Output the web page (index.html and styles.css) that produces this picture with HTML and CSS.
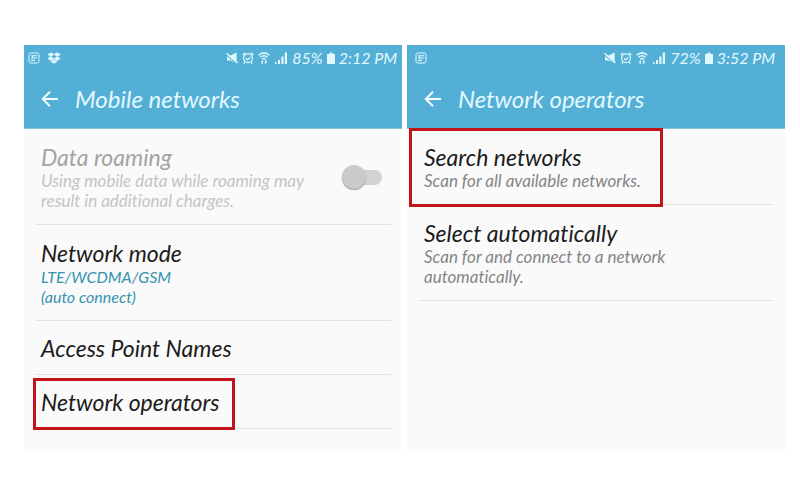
FILE: index.html
```
<!DOCTYPE html>
<html lang="en">
<head>
    <meta charset="utf-8">
    <title>Mobile networks</title>
    <link rel="stylesheet" href="styles.css">
</head>
<body>

<!-- shared icons -->
<svg class="sprite" aria-hidden="true">
    <symbol id="note" viewBox="0 0 12 12">
        <rect x="1" y="1" width="10" height="10" rx="1.8" fill="none" stroke="currentColor"/>
        <path d="M3 3.7h6.2M3 6h6.2M3 8.4h4M4.5 3.5v2.5" fill="none" stroke="currentColor" stroke-width="1.1"/>
    </symbol>
    <symbol id="dropbox" viewBox="0 0 14 12">
        <path d="M4 0.5L7 2.5L3.7 4.6L0.6 2.6ZM10 0.5L13.4 2.6L10.3 4.6L7 2.5ZM0.6 6.6L3.7 4.6L7 6.8L4 8.8ZM13.4 6.6L10.3 4.6L7 6.8L10 8.8ZM3.8 9.6L7 7.7L10.2 9.6L7 11.6Z" fill="currentColor" stroke="currentColor" stroke-width="0.4"/>
    </symbol>
    <symbol id="mute" viewBox="0 0 12 12">
        <path d="M1 3.6H4.6L10.6 0.5V11.5L4.6 8.4H1Z" fill="currentColor"/>
        <path d="M0.3 2.6L11 12" stroke="#53afd6" stroke-width="1.2"/>
        <path d="M0.5 1.2L11.5 11" stroke="currentColor" stroke-width="1.4"/>
    </symbol>
    <symbol id="alarm" viewBox="0 0 12 12">
        <circle cx="6" cy="6.3" r="4.4" fill="none" stroke="currentColor" stroke-width="1.2"/>
        <path d="M0.6 3L3 0.8M11.4 3L9 0.8M4 6.2L5.7 7.8L8.2 5.2M2.8 10.2L1.8 11.6M9.2 10.2L10.2 11.6" fill="none" stroke="currentColor" stroke-width="1.2"/>
    </symbol>
    <symbol id="wifi" viewBox="0 0 12 12">
        <path d="M0.6 3.2Q6 -1.4 11.4 3.2M2.3 5.3Q6 2.2 9.7 5.3M4.2 7.3Q6 5.7 7.8 7.3" fill="none" stroke="currentColor" stroke-width="1.5"/>
        <path d="M2.8 10L4.3 8.3L5.6 10H4.8V12H3.6V10ZM6.4 10H7.2V8H8.4V10H9.2L7.7 12Z" fill="currentColor"/>
    </symbol>
    <symbol id="signal" viewBox="0 0 14 12">
        <path d="M1 10h1.5V12H1ZM4 8h2V12H4ZM7.3 4.5h2.2V12H7.3ZM10.8 0.5H13V12H10.8Z" fill="currentColor"/>
    </symbol>
    <symbol id="battery" viewBox="0 0 8 12">
        <path d="M2.5 0.5h3v1.5H8V12H0V2h2.5Z" fill="currentColor"/>
    </symbol>
    <symbol id="back" viewBox="0 0 18 18">
        <path d="M17 9H2M9 1.8L1.8 9L9 16.2" fill="none" stroke="currentColor" stroke-width="2"/>
    </symbol>
</svg>

<main class="screens">

    <!-- MOBILE NETWORKS -->
    <section class="screen">
        <header class="top">
            <div class="status">
                <div class="notices">
                    <svg class="icon"><use href="#note"/></svg>
                    <svg class="icon wide"><use href="#dropbox"/></svg>
                </div>
                <div class="system">
                    <svg class="icon"><use href="#mute"/></svg>
                    <svg class="icon"><use href="#alarm"/></svg>
                    <svg class="icon"><use href="#wifi"/></svg>
                    <svg class="icon wide"><use href="#signal"/></svg>
                    <span>85%</span>
                    <svg class="icon thin"><use href="#battery"/></svg>
                    <span>2:12 PM</span>
                </div>
            </div>
            <div class="bar">
                <button class="back" aria-label="Back"><svg><use href="#back"/></svg></button>
                <h1>Mobile networks</h1>
            </div>
        </header>
        <ul class="list">
            <li class="row disabled">
                <label class="text" for="roaming">
                    <span class="name">Data roaming</span>
                    <span class="info">Using mobile data while roaming may<br>result in additional charges.</span>
                </label>
                <input class="switch" id="roaming" type="checkbox" disabled>
            </li>
            <li class="row">
                <div class="text">
                    <span class="name">Network mode</span>
                    <span class="info value">LTE/WCDMA/GSM<br>(auto connect)</span>
                </div>
            </li>
            <li class="row single">
                <span class="name">Access Point Names</span>
            </li>
            <li class="row single">
                <span class="name">Network operators</span>
                <span class="mark mark-operators"></span>
            </li>
        </ul>
    </section>

    <!-- NETWORK OPERATORS -->
    <section class="screen second">
        <header class="top">
            <div class="status">
                <div class="notices">
                    <svg class="icon"><use href="#note"/></svg>
                </div>
                <div class="system">
                    <svg class="icon"><use href="#mute"/></svg>
                    <svg class="icon"><use href="#alarm"/></svg>
                    <svg class="icon"><use href="#wifi"/></svg>
                    <svg class="icon wide"><use href="#signal"/></svg>
                    <span>72%</span>
                    <svg class="icon thin"><use href="#battery"/></svg>
                    <span>3:52 PM</span>
                </div>
            </div>
            <div class="bar">
                <button class="back" aria-label="Back"><svg><use href="#back"/></svg></button>
                <h1>Network operators</h1>
            </div>
        </header>
        <ul class="list">
            <li class="row">
                <div class="text">
                    <span class="name">Search networks</span>
                    <span class="info">Scan for all available networks.</span>
                </div>
                <span class="mark mark-search"></span>
            </li>
            <li class="row">
                <div class="text">
                    <span class="name">Select automatically</span>
                    <span class="info">Scan for and connect to a network<br>automatically.</span>
                </div>
            </li>
        </ul>
    </section>

</main>

</body>
</html>
```
FILE: styles.css
```
* {
    box-sizing: border-box;
}

body {
    margin: 0;
    background: #fff;
    color: #1c1c1c;
    font-family: Lato, "Open Sans", sans-serif;
    font-style: italic;
    font-variant-ligatures: none;
}

.sprite {
    position: absolute;
    width: 0;
    height: 0;
}

.screens {
    display: grid;
    grid-template-columns: 1fr 1fr;
    gap: 5px;
    padding: 45px 15px 0 24px;
}

.screen {
    background: #fafafa;
    padding-bottom: 22px;
}

.top {
    background: #53afd6;
    color: #e2f8ff;
    border-bottom: 1px solid #8cc4dc;
}

.status {
    display: flex;
    justify-content: space-between;
    align-items: center;
    height: 25px;
    padding: 0 5px 0 4px;
    font-size: 16px;
}

.second .status {
    padding: 0 10px 0 8px;
}

.notices {
    display: flex;
    gap: 7px;
}

.system {
    display: flex;
    align-items: center;
    gap: 4px;
}

.icon {
    width: 12px;
    height: 12px;
}

.wide {
    width: 14px;
}

.thin {
    width: 8px;
}

.bar {
    display: flex;
    align-items: center;
    gap: 16px;
    height: 58px;
    padding: 0 17px;
}

.back {
    width: 18px;
    height: 18px;
    padding: 0;
    border: none;
    background: none;
    color: #f4fdff;
}

.back svg {
    display: block;
    width: 18px;
    height: 18px;
}

h1 {
    margin: 0;
    font-size: 24px;
    font-weight: 400;
    line-height: 28px;
}

.list {
    list-style: none;
    margin: 0;
    padding: 0 11px;
}

.row {
    position: relative;
    display: flex;
    align-items: center;
    justify-content: space-between;
    padding: 14px 6px 13px;
    border-bottom: 1px solid #e4e4e4;
}

.single {
    padding: 13px 6px 12px;
}

.name {
    display: block;
    font-size: 23px;
    line-height: 28px;
}

.info {
    display: block;
    color: #858585;
    font-size: 17px;
    line-height: 20px;
}

.value {
    color: #3592ae;
    font-size: 16px;
}

.disabled .name {
    color: #a3a3a3;
}

.disabled .info {
    color: #c4c4c4;
}

.switch {
    appearance: none;
    display: flex;
    align-items: center;
    width: 40px;
    height: 24px;
    margin: 0 3px 0 0;
}

.switch::before {
    content: "";
    z-index: 1;
    width: 24px;
    height: 24px;
    border-radius: 50%;
    background: #cacaca;
    box-shadow: 0 1px 1px #999;
}

.switch::after {
    content: "";
    width: 28px;
    height: 15px;
    margin-left: -12px;
    border-radius: 8px;
    background: #d2d2d2;
}

/* red frames around the options to tap */
.mark {
    position: absolute;
    border: 3px solid #c2141b;
}

.mark-operators {
    top: 3px;
    bottom: -2px;
    left: -2px;
    width: 202px;
}

.mark-search {
    top: -1px;
    bottom: -3px;
    left: -9px;
    width: 254px;
}
```
